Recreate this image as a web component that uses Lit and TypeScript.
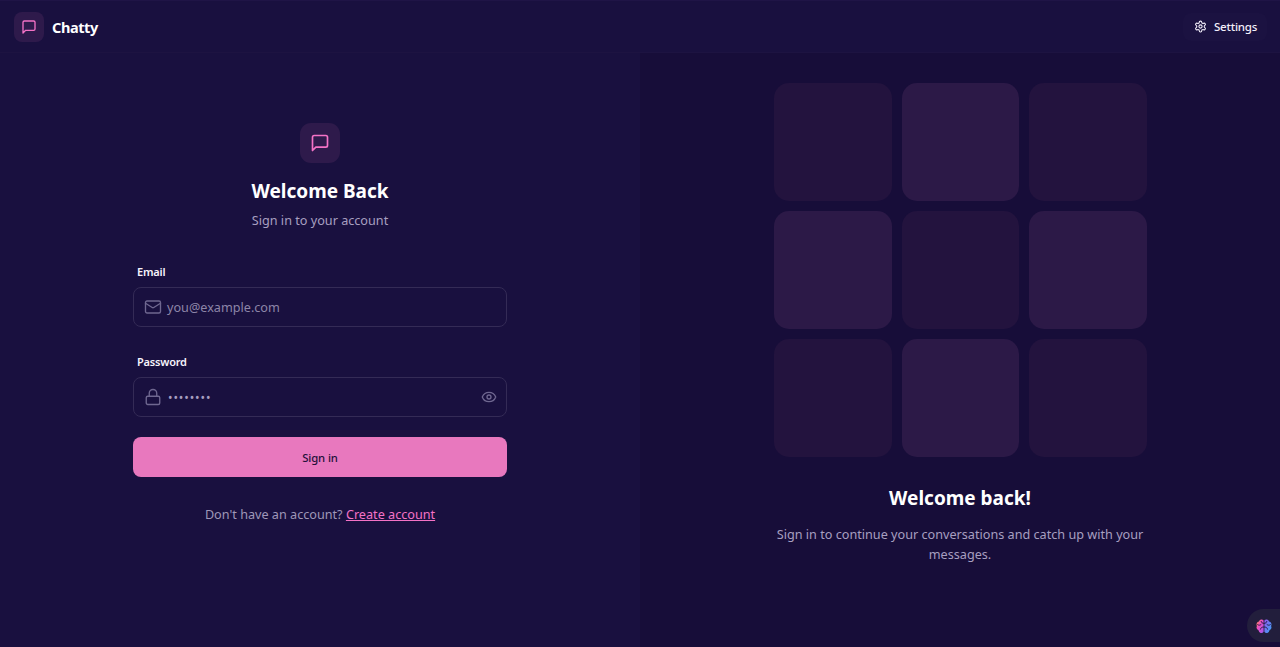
import { LitElement, html, css, svg } from "lit";
import { customElement } from "lit/decorators.js";

const msg = (size: number) => html`<svg width=${size} height=${size} viewBox="0 0 24 24" fill="none" stroke="#f472c6" stroke-width="2" stroke-linecap="round" stroke-linejoin="round"><path d="M21 15a2 2 0 0 1-2 2H7l-4 4V5a2 2 0 0 1 2-2h14a2 2 0 0 1 2 2z"/></svg>`;

@customElement("app-root")
export class AppRoot extends LitElement {
  static styles = css`
    :host { display: block; height: 647px; overflow: hidden; position: relative; background: #19103f; color: #fff; font-family: "Noto Sans", "Open Sans", sans-serif; }
    * { box-sizing: border-box; }
    header { height: 53px; display: flex; align-items: center; justify-content: space-between; padding: 0 13px 0 14px; background: #19103f; border-bottom: 1px solid #1d1341; border-top: 1px solid #1f1446; }
    .brand { display: flex; align-items: center; gap: 8px; }
    .logo { width: 30px; height: 30px; border-radius: 8px; background: #2e1a4b; display: flex; align-items: center; justify-content: center; }
    .name { font-size: 14.5px; font-weight: 700; letter-spacing: -0.4px; }
    .settings { display: flex; align-items: center; gap: 7px; height: 28px; width: 84px; padding-left: 11px; border-radius: 8px; background: #1b1241; font-size: 11.5px; letter-spacing: -0.2px; font-weight: 500; color: #f3effa; }
    main { display: grid; grid-template-columns: 640px 640px; height: 594px; }
    .left { display: flex; flex-direction: column; align-items: center; padding-top: 70px; background: #19103f; }
    .form { width: 374px; display: flex; flex-direction: column; }
    .head { display: flex; flex-direction: column; align-items: center; }
    .badge { width: 40px; height: 40px; border-radius: 11px; background: #2e1a4b; display: flex; align-items: center; justify-content: center; }
    h1 { margin: 14px 0 0; font-size: 19px; line-height: 28px; font-weight: 700; color: #fff; }
    .sub { margin-top: 3px; font-size: 12.65px; line-height: 24px; color: #a79fc0; }
    .field { display: flex; flex-direction: column; }
    .field.first { margin-top: 26px; }
    .field.second { margin-top: 21px; }
    label { height: 29px; padding: 4px 4px 0; font-size: 11px; letter-spacing: -0.2px; line-height: 20px; font-weight: 600; color: #f6f3fb; }
    .input { height: 40px; border: 1px solid #342b56; border-radius: 8px; display: flex; align-items: center; padding: 0 9px 0 10px; gap: 5px; background: #19103f; }
    .ph { flex: 1; font-size: 12.65px; color: #8d85a8; }
    .dots { flex: 1; font-size: 12px; letter-spacing: 0.9px; color: #a79fc0; padding-left: 1px; }
    button { margin-top: 20px; height: 40px; border: none; border-radius: 8px; background: #e878be; color: #24103a; font: 500 11.3px "Noto Sans", "Open Sans", sans-serif; letter-spacing: -0.1px; }
    .foot { margin-top: 25px; text-align: center; font-size: 12.65px; line-height: 24px; color: #9f97b8; }
    .foot a { color: #f472c6; text-decoration: underline; }
    .right { background: #170d39; display: flex; flex-direction: column; align-items: center; padding-top: 30px; }
    .grid { display: grid; width: 373.33px; margin-left: 1px; grid-template-columns: repeat(3, 1fr); grid-auto-rows: 118px; gap: 10px; }
    .tile { border-radius: 15px; background: #23133e; }
    .tile.on { background: #2c1947; }
    h2 { margin: 27px 0 0; font-size: 19px; line-height: 28px; font-weight: 700; }
    .desc { margin: 12px 0 0; width: 374px; text-align: center; font-size: 12.65px; line-height: 20px; color: #a79fc0; }
    .helper { position: absolute; right: 0; top: 609px; width: 33px; height: 33px; border-radius: 17px 0 0 17px; background: #221e3c; display: flex; align-items: center; padding-left: 9px; }
  `;

  render() {
    const tiles = [0, 1, 0, 1, 0, 1, 0, 1, 0];
    return html`
      <header>
        <div class="brand"><div class="logo">${msg(16)}</div><span class="name">Chatty</span></div>
        <div class="settings">
          <svg width="13" height="13" viewBox="0 0 24 24" fill="none" stroke="#f3effa" stroke-width="2" stroke-linecap="round" stroke-linejoin="round"><path d="M12.22 2h-.44a2 2 0 0 0-2 2v.18a2 2 0 0 1-1 1.73l-.43.25a2 2 0 0 1-2 0l-.15-.08a2 2 0 0 0-2.73.73l-.22.38a2 2 0 0 0 .73 2.73l.15.1a2 2 0 0 1 1 1.72v.51a2 2 0 0 1-1 1.74l-.15.09a2 2 0 0 0-.73 2.73l.22.38a2 2 0 0 0 2.73.73l.15-.08a2 2 0 0 1 2 0l.43.25a2 2 0 0 1 1 1.73V20a2 2 0 0 0 2 2h.44a2 2 0 0 0 2-2v-.18a2 2 0 0 1 1-1.73l.43-.25a2 2 0 0 1 2 0l.15.08a2 2 0 0 0 2.73-.73l.22-.39a2 2 0 0 0-.73-2.73l-.15-.08a2 2 0 0 1-1-1.74v-.5a2 2 0 0 1 1-1.74l.15-.09a2 2 0 0 0 .73-2.73l-.22-.38a2 2 0 0 0-2.73-.73l-.15.08a2 2 0 0 1-2 0l-.43-.25a2 2 0 0 1-1-1.73V4a2 2 0 0 0-2-2z"/><circle cx="12" cy="12" r="3"/></svg>
          <span>Settings</span>
        </div>
      </header>
      <main>
        <section class="left">
          <div class="form">
            <div class="head">
              <div class="badge">${msg(20)}</div>
              <h1>Welcome Back</h1>
              <div class="sub">Sign in to your account</div>
            </div>
            <div class="field first">
              <label>Email</label>
              <div class="input">
                <svg width="18" height="18" viewBox="0 0 24 24" fill="none" stroke="#6f6790" stroke-width="1.8" stroke-linecap="round" stroke-linejoin="round"><rect x="2" y="4" width="20" height="16" rx="2"/><path d="m22 7-8.97 5.7a1.94 1.94 0 0 1-2.06 0L2 7"/></svg>
                <span class="ph">you@example.com</span>
              </div>
            </div>
            <div class="field second">
              <label>Password</label>
              <div class="input">
                <svg width="18" height="18" viewBox="0 0 24 24" fill="none" stroke="#6f6790" stroke-width="1.8" stroke-linecap="round" stroke-linejoin="round"><rect x="3" y="11" width="18" height="11" rx="2"/><path d="M7 11V7a5 5 0 0 1 10 0v4"/></svg>
                <span class="dots">••••••••</span>
                <svg width="16" height="16" viewBox="0 0 24 24" fill="none" stroke="#6f6790" stroke-width="2" stroke-linecap="round" stroke-linejoin="round"><path d="M2.06 12.35a1 1 0 0 1 0-.7 10.75 10.75 0 0 1 19.88 0 1 1 0 0 1 0 .7 10.75 10.75 0 0 1-19.88 0"/><circle cx="12" cy="12" r="3"/></svg>
              </div>
            </div>
            <button>Sign in</button>
            <div class="foot">Don't have an account? <a>Create account</a></div>
          </div>
        </section>
        <section class="right">
          <div class="grid">${tiles.map((t) => html`<div class="tile ${t ? "on" : ""}"></div>`)}</div>
          <h2>Welcome back!</h2>
          <p class="desc">Sign in to continue your conversations and catch up with your messages.</p>
        </section>
      </main>
      <div class="helper">
        <svg width="16" height="16" viewBox="0 0 24 24" stroke="#1b1436" stroke-width="1.3" stroke-linecap="round" stroke-linejoin="round">
          ${svg`<defs>
            <linearGradient id="bl" x1="0" y1="0" x2="1" y2="1"><stop offset="0" stop-color="#f79a3a"/><stop offset=".4" stop-color="#ee4fc0"/><stop offset="1" stop-color="#9a55f0"/></linearGradient>
            <linearGradient id="br" x1="0" y1="0" x2="1" y2="1"><stop offset="0" stop-color="#9a55f0"/><stop offset="1" stop-color="#35a7f5"/></linearGradient>
          </defs>
          <path d="M11.4 3.6a4 4 0 0 0-7 1.6 4.6 4.6 0 0 0-3 6.8 4.6 4.6 0 0 0 2.6 6.6 4 4 0 0 0 7.4 2Z" fill="url(#bl)" stroke="none"/>
          <path d="M12.6 3.6a4 4 0 0 1 7 1.6 4.6 4.6 0 0 1 3 6.8 4.6 4.6 0 0 1-2.6 6.6 4 4 0 0 1-7.4 2Z" fill="url(#br)" stroke="none"/>
          <path d="M11.4 8c-2 0-3.2-1-3.6-2.8M11.4 13.5c-2.6 0-4.2 1-4.6 3.2M2.5 10c1.6 1.2 3.4 1.2 5-.2M12.6 8c2 0 3.2-1 3.6-2.8M12.6 13.5c2.6 0 4.2 1 4.6 3.2M21.5 10c-1.6 1.2-3.4 1.2-5-.2" fill="none"/>`}
        </svg>
      </div>
    `;
  }
}
